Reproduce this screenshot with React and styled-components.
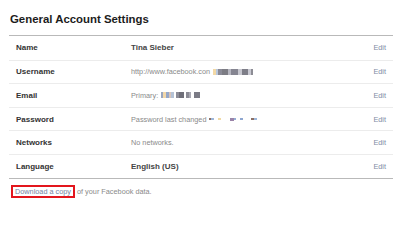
import React from "react";
import styled, { createGlobalStyle } from "styled-components";

const GlobalStyle = createGlobalStyle`
  html, body {
    margin: 0;
    padding: 0;
    background: #fff;
  }
  body {
    font-family: "Liberation Sans", Arial, sans-serif;
  }
`;

// pixelated bits that hide the private data in the screenshot
const usernameMask = [
  { w: 3, c: "#f3d9a6" },
  { w: 2, c: "#b9c7dc" },
  { w: 4, c: "#8a8a96" },
  { w: 6, c: "#7c7c84" },
  { w: 3, c: "#b6b6c0" },
  { w: 7, c: "#858591" },
  { w: 4, c: "#c7c7cf" },
  { w: 6, c: "#7e7e88" },
  { w: 3, c: "#c9c9d2" },
  { w: 2, c: "#8c8c94" },
];

const emailMask = [
  { w: 2, c: "#9aa6bf" },
  { w: 3, c: "#f2d7a9" },
  { w: 3, c: "#95a7c9" },
  { w: 2, c: "#d9c4b8" },
  { w: 3, c: "#b4c2d6", gap: 2 },
  { w: 3, c: "#8c8c97" },
  { w: 5, c: "#6f6f79", gap: 2 },
  { w: 3, c: "#8b8b95" },
  { w: 2, c: "#a9a9b3", gap: 3 },
  { w: 6, c: "#7b7b85" },
];

const passwordMask = [
  { w: 2, h: 2, c: "#8c6f64" },
  { w: 3, h: 2, c: "#9db7db", gap: 4 },
  { w: 3, h: 2, c: "#f0d9a5", gap: 9 },
  { w: 4, h: 3, c: "#9a83a8" },
  { w: 2, h: 2, c: "#95aed6", gap: 4 },
  { w: 3, h: 2, c: "#8ea6d0", gap: 8 },
  { w: 3, h: 2, c: "#8c6f64" },
  { w: 3, h: 2, c: "#9db7db" },
];

const rows = [
  { label: "Name", value: "Tina Sieber", strong: true },
  { label: "Username", value: "http://www.facebook.con", mask: usernameMask },
  { label: "Email", value: "Primary:", mask: emailMask },
  { label: "Password", value: "Password last changed", mask: passwordMask },
  { label: "Networks", value: "No networks." },
  { label: "Language", value: "English (US)", strong: true },
];

export default function App() {
  return (
    <Page>
      <GlobalStyle />
      <Title>General Account Settings</Title>
      <Table>
        {rows.map((row) => (
          <Row key={row.label}>
            <Label>{row.label}</Label>
            <Value $strong={row.strong}>
              {row.value}
              {row.mask && (
                <Mask>
                  {row.mask.map((m, i) => (
                    <Pixel key={i} $w={m.w} $h={m.h} $c={m.c} $gap={m.gap} />
                  ))}
                </Mask>
              )}
            </Value>
            <EditLink href="#">Edit</EditLink>
          </Row>
        ))}
      </Table>
      <Footer>
        <Highlight href="#">Download a copy</Highlight>
        <span> of your Facebook data.</span>
      </Footer>
    </Page>
  );
}

const Page = styled.div`
  width: 384px;
  padding: 11px 0 0 9px;
`;

const Title = styled.h2`
  margin: 0 0 7px 1px;
  font-size: 11.4px;
  line-height: 17px;
  font-weight: bold;
  color: #1c1c1c;
`;

const Table = styled.div`
  border-top: 1px solid #b9b9b9;
  border-bottom: 1px solid #b9b9b9;
`;

const Row = styled.div`
  display: grid;
  grid-template-columns: 115px 1fr auto;
  align-items: center;
  height: 23.6px;
  padding: 0 7px;
  box-sizing: border-box;
  & + & {
    border-top: 1px solid #ececec;
  }
`;

const Label = styled.span`
  font-size: 8px;
  font-weight: bold;
  color: #333;
`;

const Value = styled.span`
  display: flex;
  align-items: center;
  font-size: ${(p) => (p.$strong ? "8px" : "7.3px")};
  font-weight: ${(p) => (p.$strong ? "bold" : "normal")};
  color: ${(p) => (p.$strong ? "#444" : "#8a8a8a")};
  white-space: nowrap;
`;

const Mask = styled.span`
  display: inline-flex;
  align-items: center;
  margin-left: 3px;
`;

const Pixel = styled.span`
  display: inline-block;
  width: ${(p) => p.$w}px;
  height: ${(p) => p.$h || 6}px;
  background: ${(p) => p.$c};
  margin-right: ${(p) => p.$gap || 0}px;
`;

const EditLink = styled.a`
  font-size: 7.3px;
  color: #7f8ca4;
  text-decoration: none;
`;

const Footer = styled.p`
  margin: 6px 0 0 2px;
  font-size: 7.3px;
  color: #8a8a8a;
  display: flex;
  align-items: center;
  white-space: pre;
`;

const Highlight = styled.a`
  color: #7584a3;
  text-decoration: none;
  border: 2px solid #e3161d;
  padding: 0 2px 0 2px;
`;
